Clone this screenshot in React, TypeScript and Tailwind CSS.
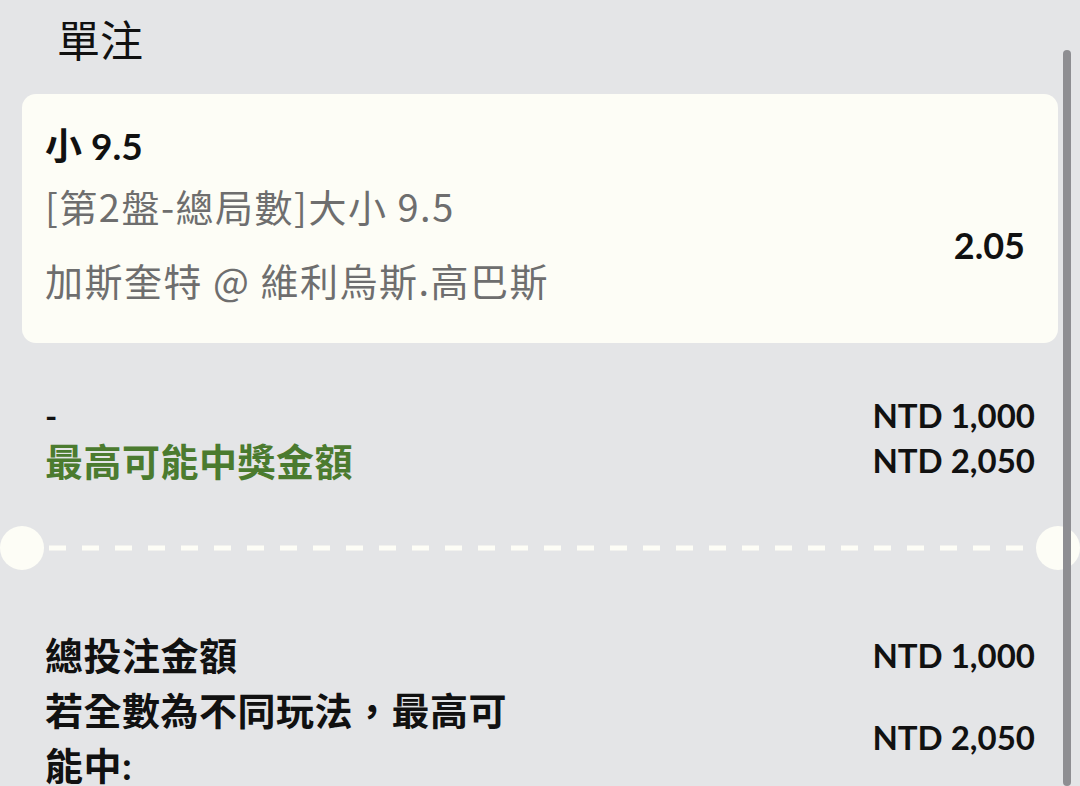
export default function App() {
  return (
    <div className="relative h-[786px] w-[1080px] overflow-hidden bg-[#e4e5e7] font-['Lato','Noto_Sans_CJK_TC',sans-serif] text-[#111]">
      {/* Title */}
      <div className="h-[94px] pl-[57px] pt-[8px]">
        <h1 className="font-['Noto_Sans_CJK_TC',sans-serif] text-[43px] font-normal leading-[60px]">單注</h1>
      </div>

      {/* Bet card */}
      <div className="mx-[22px] flex items-start justify-between rounded-[14px] bg-[#fdfdf6] pb-[38px] pl-[23px] pr-[33px] pt-[30px]">
        <div className="flex flex-col">
          <div className="h-[44px] text-[37px] font-bold leading-[44px]">小 9.5</div>
          <div className="mt-[13px] h-[50px] font-['Noto_Sans_CJK_TC',sans-serif] text-[38px] font-normal leading-[50px] tracking-[1.5px] text-[#6e6e6e]">
            [第2盤-總局數]大小 9.5
          </div>
          <div className="mt-[24px] h-[50px] font-['Noto_Sans_CJK_TC',sans-serif] text-[38px] font-normal leading-[50px] tracking-[1.5px] text-[#6e6e6e]">
            加斯奎特 @ 維利烏斯.高巴斯
          </div>
        </div>
        <div className="mt-[99px] text-[36px] font-bold leading-[44px]">2.05</div>
      </div>

      {/* Stake / potential win */}
      <div className="mt-[51px] px-[45px]">
        <div className="flex h-[44px] items-center justify-between">
          <span className="text-[33px] font-bold">-</span>
          <span className="text-[33px] font-bold">NTD 1,000</span>
        </div>
        <div className="flex h-[46px] items-center justify-between">
          <span className="text-[38px] font-bold tracking-[0.5px] text-[#4b7b2f]">最高可能中獎金額</span>
          <span className="text-[33px] font-bold">NTD 2,050</span>
        </div>
      </div>

      {/* Ticket tear line */}
      <div className="mt-[42px] flex h-[44px] items-center">
        <div className="h-[44px] w-[44px] shrink-0 rounded-full bg-[#fdfdf6]" />
        <svg className="mx-[5px] h-[6px] flex-1" preserveAspectRatio="none">
          <line x1="0" y1="3" x2="100%" y2="3" stroke="#fdfdf6" strokeWidth="5" strokeDasharray="17 16" />
        </svg>
        <div className="h-[44px] w-[44px] shrink-0 rounded-full bg-[#fdfdf6]" />
      </div>

      {/* Totals */}
      <div className="mt-[58px] px-[45px]">
        <div className="flex h-[55px] items-center justify-between">
          <span className="text-[38px] font-bold tracking-[0.5px]">總投注金額</span>
          <span className="text-[33px] font-bold">NTD 1,000</span>
        </div>
        <div className="flex items-center justify-between">
          <div className="w-[490px] text-[38px] font-bold leading-[55px] tracking-[0.5px]">
            若全數為不同玩法，最高可能中:
          </div>
          <span className="text-[33px] font-bold">NTD 2,050</span>
        </div>
      </div>

      {/* Scrollbar */}
      <div className="absolute bottom-0 right-[9px] top-[50px] w-[8px] rounded-full bg-[#8e8e92]" />
    </div>
  );
}
